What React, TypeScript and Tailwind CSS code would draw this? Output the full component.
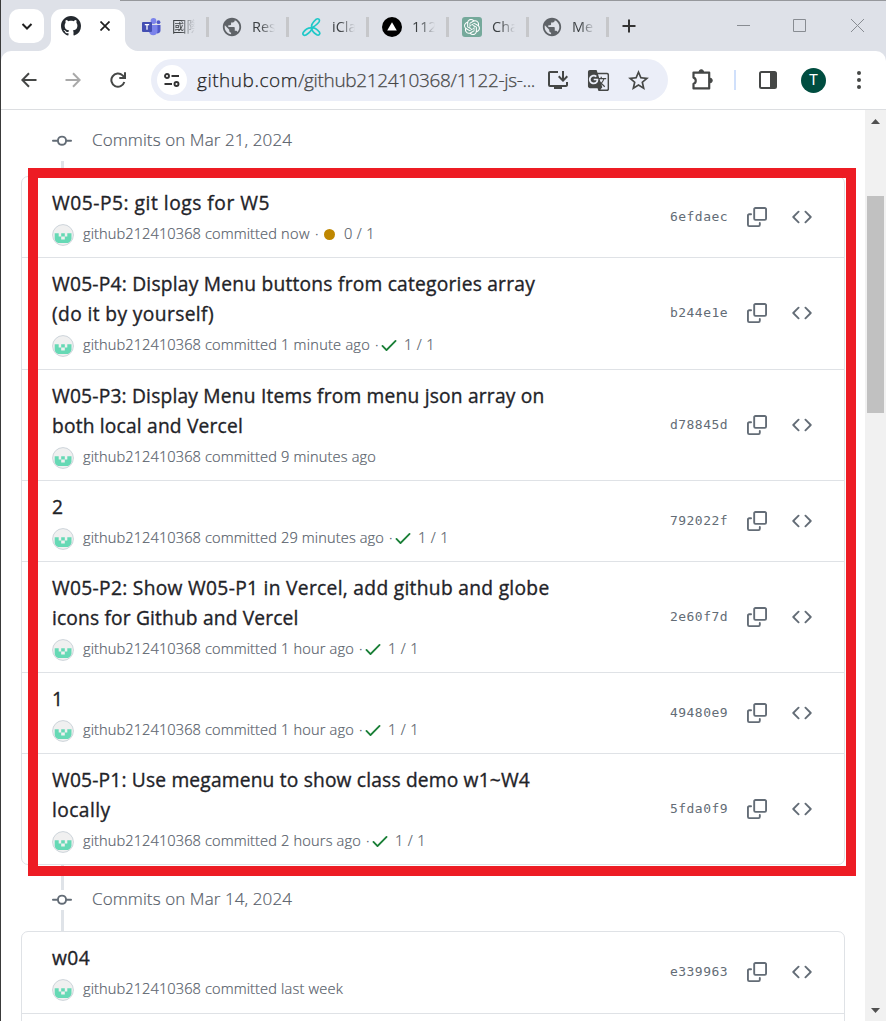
import { useLayoutEffect, useRef, type ReactNode } from 'react';
import { MdInstallDesktop, MdStarBorder, MdPublic, MdGTranslate } from 'react-icons/md';
import { SiOpenai } from 'react-icons/si';

/* Text set to an exact measure by spreading the difference over its letters. */
function Fit({ text, width, className = '' }: { text: string; width: number; className?: string }) {
  const ref = useRef<HTMLSpanElement>(null);
  useLayoutEffect(() => {
    const el = ref.current;
    if (!el) return;
    el.style.letterSpacing = '0px';
    const natural = el.getBoundingClientRect().width;
    el.style.letterSpacing = `${(width - natural) / text.length}px`;
  }, [text, width]);
  return (
    <span ref={ref} className={`inline-block whitespace-pre ${className}`}>
      {text}
    </span>
  );
}

type Commit = {
  title: [string, number][];
  time: string;
  timeWidth: number;
  status?: 'pending' | 'done';
  count?: string;
  hash: string;
  height: string;
};

const march21: Commit[] = [
  { title: [['W05-P5: git logs for W5', 218]], time: 'now', timeWidth: 29, status: 'pending', count: '0 / 1', hash: '6efdaec', height: 'h-[80px]' },
  { title: [['W05-P4: Display Menu buttons from categories array', 483], ['(do it by yourself)', 162]], time: '1 minute ago', timeWidth: 89, status: 'done', count: '1 / 1', hash: 'b244e1e', height: 'h-[112px] pb-px' },
  { title: [['W05-P3: Display Menu Items from menu json array on', 492.5], ['both local and Vercel', 191]], time: '9 minutes ago', timeWidth: 95, hash: 'd78845d', height: 'h-[111px]' },
  { title: [['2', 11]], time: '29 minutes ago', timeWidth: 103, status: 'done', count: '1 / 1', hash: '792022f', height: 'h-[81px]' },
  { title: [['W05-P2: Show W05-P1 in Vercel, add github and globe', 497.5], ['icons for Github and Vercel', 246.5]], time: '1 hour ago', timeWidth: 73, status: 'done', count: '1 / 1', hash: '2e60f7d', height: 'h-[111px]' },
  { title: [['1', 11]], time: '1 hour ago', timeWidth: 73, status: 'done', count: '1 / 1', hash: '49480e9', height: 'h-[81px]' },
  { title: [['W05-P1: Use megamenu to show class demo w1~W4', 478], ['locally', 58.5]], time: '2 hours ago', timeWidth: 80, status: 'done', count: '1 / 1', hash: '5fda0f9', height: 'h-[111px]' },
];

const march14: Commit[] = [
  { title: [['w04', 38]], time: 'last week', timeWidth: 62, hash: 'e339963', height: 'h-[81px] pb-[2px]' },
];

function Octicon({ d, className = '' }: { d: string[]; className?: string }) {
  return (
    <svg viewBox="0 0 16 16" className={`shrink-0 fill-current ${className}`}>
      {d.map((p) => (
        <path key={p} d={p} />
      ))}
    </svg>
  );
}

const MARK = [
  'M8 0C3.58 0 0 3.58 0 8c0 3.54 2.29 6.53 5.47 7.59.4.07.55-.17.55-.38 0-.19-.01-.82-.01-1.49-2.01.37-2.53-.49-2.69-.94-.09-.23-.48-.94-.82-1.13-.28-.15-.68-.52-.01-.53.63-.01 1.08.58 1.23.82.72 1.21 1.87.87 2.33.66.07-.52.28-.87.51-1.07-1.78-.2-3.64-.89-3.64-3.95 0-.87.31-1.59.82-2.15-.08-.2-.36-1.02.08-2.12 0 0 .67-.21 2.2.82.64-.18 1.32-.27 2-.27.68 0 1.36.09 2 .27 1.53-1.04 2.2-.82 2.2-.82.44 1.1.16 1.92.08 2.12.51.56.82 1.27.82 2.15 0 3.07-1.87 3.75-3.65 3.95.29.25.54.73.54 1.48 0 1.07-.01 1.93-.01 2.2 0 .21.15.46.55.38A8.013 8.013 0 0 0 16 8c0-4.42-3.58-8-8-8Z',
];
const COPY = [
  'M0 6.75C0 5.784.784 5 1.75 5h1.5a.75.75 0 0 1 0 1.5h-1.5a.25.25 0 0 0-.25.25v7.5c0 .138.112.25.25.25h7.5a.25.25 0 0 0 .25-.25v-1.5a.75.75 0 0 1 1.5 0v1.5A1.75 1.75 0 0 1 9.25 16h-7.5A1.75 1.75 0 0 1 0 14.25Z',
  'M5 1.75C5 .784 5.784 0 6.75 0h7.5C15.216 0 16 .784 16 1.75v7.5A1.75 1.75 0 0 1 14.25 11h-7.5A1.75 1.75 0 0 1 5 9.25Zm1.75-.25a.25.25 0 0 0-.25.25v7.5c0 .138.112.25.25.25h7.5a.25.25 0 0 0 .25-.25v-7.5a.25.25 0 0 0-.25-.25Z',
];
const CODE = [
  'm11.28 3.22 4.25 4.25a.75.75 0 0 1 0 1.06l-4.25 4.25a.749.749 0 0 1-1.275-.326.749.749 0 0 1 .215-.734L13.94 8l-3.72-3.72a.749.749 0 0 1 .326-1.275.749.749 0 0 1 .734.215Zm-6.56 0a.751.751 0 0 1 1.042.018.751.751 0 0 1 .018 1.042L2.06 8l3.72 3.72a.749.749 0 0 1-.326 1.275.749.749 0 0 1-.734-.215L.47 8.53a.75.75 0 0 1 0-1.06Z',
];
const GIT_COMMIT = [
  'M11.93 8.5a4.002 4.002 0 0 1-7.86 0H.75a.75.75 0 0 1 0-1.5h3.32a4.002 4.002 0 0 1 7.86 0h3.32a.75.75 0 0 1 0 1.5Zm-1.43-.75a2.5 2.5 0 1 0-5 0 2.5 2.5 0 0 0 5 0Z',
];
const CHECK = [
  'M13.78 4.22a.75.75 0 0 1 0 1.06l-7.25 7.25a.75.75 0 0 1-1.06 0L2.22 9.28a.751.751 0 0 1 .018-1.042.751.751 0 0 1 1.042-.018L6 10.94l6.72-6.72a.75.75 0 0 1 1.06 0Z',
];

function Avatar() {
  return (
    <svg viewBox="0 0 22 22" className="h-[22px] w-[22px] shrink-0">
      <defs>
        <clipPath id="avatar-clip">
          <circle cx="11" cy="11" r="9.7" />
        </clipPath>
      </defs>
      <circle cx="11" cy="11" r="10.4" fill="#f0f0f0" />
      <path
        clipPath="url(#avatar-clip)"
        fill="#66d9b5"
        fillRule="evenodd"
        d="M2.700 9.200h4v3.300h2.500V9.200h3.600v3.300h2.500V9.200h4.200V19H2.700ZM9.200 12.500v3.100h3.600v-3.100Z"
      />
      <circle cx="11" cy="11" r="10.4" fill="none" stroke="#cdd4da" strokeWidth="1" />
    </svg>
  );
}

function CommitRow({ c, first }: { c: Commit; first: boolean }) {
  return (
    <li className={`flex shrink-0 justify-between pl-[30px] pr-[32px] ${c.height} ${first ? '' : 'border-t border-[#dfe2e6]'}`}>
      <div className="pt-[11px]">
        <h3 className="text-[19.2px] leading-[30px] text-[#1f2328] [-webkit-text-stroke:0.35px_#1f2328]">
          {c.title.map(([line, w]) => (
            <span key={line} className="block">
              <Fit text={line} width={w} />
            </span>
          ))}
        </h3>
        <div className="flex h-[32px] items-center text-[14.6px] font-light text-[#57606a] [-webkit-text-stroke:0.2px_#57606a]">
          <div className="mr-[9px] mt-px">
            <Avatar />
          </div>
          <span className="w-[122px]">
            <Fit text="github212410368" width={118} />
          </span>
          <span className="w-[76px]">
            <Fit text="committed" width={72} />
          </span>
          <Fit text={c.time} width={c.timeWidth} />
          {c.status && (
            <>
              <span className="ml-[5px] w-[4px]">·</span>
              {c.status === 'pending' ? (
                <span className="ml-[5px] mr-[9px] h-[11px] w-[11px] rounded-full bg-[#bf8700]" />
              ) : (
                <Octicon d={CHECK} className="mr-[5px] h-5 w-5 text-[#1a7f37]" />
              )}
              <Fit text={c.count ?? ''} width={31} />
            </>
          )}
        </div>
      </div>
      <div className="flex h-[79px] items-center self-center text-[#636c76]">
        <Fit text={c.hash} width={58} className="font-['DejaVu_Sans_Mono',monospace] text-[13px]" />
        <Octicon d={COPY} className="ml-[19px] h-5 w-5" />
        <Octicon d={CODE} className="ml-[25px] h-5 w-5" />
      </div>
    </li>
  );
}

function CommitList({ commits, children }: { commits: Commit[]; children?: ReactNode }) {
  return (
    <ul className="ml-[20px] w-[824px] rounded-[7px] border border-[#dfe2e6] bg-white">
      {commits.map((c, i) => (
        <CommitRow key={c.hash} c={c} first={i === 0} />
      ))}
      {children}
    </ul>
  );
}

function TimelineHeader({ label, top }: { label: string; top: boolean }) {
  return (
    <div className="flex h-[66px] shrink-0 pl-[51px]">
      <div className="flex w-5 flex-col items-center">
        <span className={top ? 'h-[21px] w-[3px]' : 'h-[25px] w-[3px] bg-[#dfe3e8]'} />
        <Octicon d={GIT_COMMIT} className={top ? 'mb-[10px] h-5 w-5' : 'h-5 w-5'} />
        <span className="w-[3px] grow bg-[#dfe3e8]" />
      </div>
      <h2 className={`ml-[20px] text-[17px] font-light leading-[26px] text-[#57606a] [-webkit-text-stroke:0.2px_#57606a] ${top ? 'mt-[17px]' : 'mt-[21px]'}`}>
        <Fit text={label} width={200} />
      </h2>
    </div>
  );
}

function TeamsIcon() {
  return (
    <svg viewBox="0 0 20 20" className="h-5 w-5">
      <circle cx="16.500" cy="5.200" r="1.900" fill="#5059c9" />
      <path d="M14 8h4.500v5.500a2.800 2.800 0 0 1-4.500 2.300Z" fill="#5059c9" />
      <circle cx="11.500" cy="4" r="2.900" fill="#7b83eb" />
      <path d="M7 8h8.500v6.500a4.300 4.300 0 0 1-8.500 0Z" fill="#7b83eb" />
      <rect x="0" y="5" width="10" height="10" rx="1" fill="#444fb3" />
      <path d="M2.800 7.700h4.400M5 7.700v5" stroke="#fff" strokeWidth="1.300" />
    </svg>
  );
}

function IClassIcon() {
  return (
    <svg viewBox="0 0 20 20" className="h-5 w-5" fill="none" stroke="#1fc8c8" strokeWidth="1.700" strokeLinejoin="round">
      <path d="M9.800 11C8.600 8.200 10.500 5.500 14.300 2.200c1.900-1.200 3.900.4 2.900 2.400C15.500 7.500 12 9.500 9.800 11Z" />
      <path d="M9.800 11C6 10.500 3 13 1.200 15.600c-1 2 .8 3.500 2.700 2.500C7 16 10 14 9.800 11Z" />
      <path d="M9.800 11c3-.8 5.400 1.300 7.700 4.200 1.100 2-.9 3.500-2.700 2.500C12 16 9.500 14 9.800 11Z" />
    </svg>
  );
}

function VercelIcon() {
  return (
    <svg viewBox="0 0 20 20" className="h-5 w-5">
      <circle cx="10" cy="10" r="10" fill="#000" />
      <path d="M10 5.200 14.800 13.500H5.200Z" fill="#fff" />
    </svg>
  );
}

function ChatIcon() {
  return (
    <span className="flex h-5 w-5 items-center justify-center rounded-[3px] bg-[#75a99b] text-white">
      <SiOpenai size={16} />
    </span>
  );
}

function Globe() {
  return <MdPublic size={22} className="-ml-px shrink-0 text-[#5f6368]" />;
}

const tabs: { icon: ReactNode; label: string }[] = [
  { icon: <TeamsIcon />, label: '國際' },
  { icon: <Globe />, label: 'Res' },
  { icon: <IClassIcon />, label: 'iCla' },
  { icon: <VercelIcon />, label: '112' },
  { icon: <ChatIcon />, label: 'Cha' },
  { icon: <Globe />, label: 'Me' },
];

function TabStrip() {
  return (
    <div className="flex h-[51px] items-start bg-[#dee1e8]">
      <div className="ml-[8px] mt-[9px] flex h-[34px] w-[35px] items-center justify-center rounded-[10px] bg-white">
        <svg viewBox="0 0 12 12" className="h-3 w-3" fill="none" stroke="#1f1f1f" strokeWidth="2">
          <path d="m1.500 4 4.500 4.500L10.500 4" />
        </svg>
      </div>
      <div className="relative ml-[7px] mt-[9px] flex h-[42px] w-[74px] items-start rounded-t-[11px] bg-white pl-[10px] pt-[7px]">
        <svg viewBox="0 0 14 14" className="absolute -left-[13px] bottom-0 h-[14px] w-[14px]">
          <path d="M14 0v14H0A13 13 0 0 0 13 0Z" fill="#fff" />
        </svg>
        <svg viewBox="0 0 14 14" className="absolute -right-[13px] bottom-0 h-[14px] w-[14px]">
          <path d="M0 0v14h14A13 13 0 0 1 1 0Z" fill="#fff" />
        </svg>
        <Octicon d={MARK} className="h-5 w-5 text-[#24292f]" />
        <svg viewBox="0 0 10 10" className="ml-[19px] mt-[5px] h-[10px] w-[10px]" stroke="#1f1f1f" strokeWidth="1.700">
          <path d="m.5.5 9 9M9.500.5l-9 9" />
        </svg>
      </div>
      <div className="ml-[4px] mt-[16px] flex">
        {tabs.map((t, i) => (
          <div key={i} className="flex h-[22px] w-20 items-center pl-[13px]">
            <span className="flex w-[20px] shrink-0">{t.icon}</span>
            <span className="ml-[10px] w-[23px] shrink-0 overflow-hidden whitespace-nowrap text-[14.5px] leading-[22px] text-[#3c4043] mask-r-from-35% mask-r-to-100%">
              {t.label}
            </span>
            <span className="ml-[11px] h-5 w-[3px] shrink-0 bg-[#c6c7ca]" />
          </div>
        ))}
      </div>
      <svg viewBox="0 0 14 14" className="ml-[13px] mt-[19px] h-[14px] w-[14px]" stroke="#333" strokeWidth="2">
        <path d="M7 .5v13M.5 7h13" />
      </svg>
      <div className="ml-auto mr-[22px] mt-[19px] flex gap-[43px]">
        <svg viewBox="0 0 13 13" className="h-[13px] w-[13px]" stroke="#888c92" fill="none">
          <path d="M0 6.500h13" />
        </svg>
        <svg viewBox="0 0 13 13" className="h-[13px] w-[13px]" stroke="#888c92" fill="none">
          <path d="M.5.5h12v12H.5Z" />
        </svg>
        <svg viewBox="0 0 13 13" className="ml-[2px] h-[13px] w-[13px]" stroke="#888c92" fill="none">
          <path d="m0 0 13 13M13 0 0 13" />
        </svg>
      </div>
    </div>
  );
}

function Toolbar() {
  return (
    <div className="bg-[#dee1e8]">
      <div className="flex h-[59px] items-center rounded-t-[10px] border-b border-[#dcdee1] bg-white pl-[20px] text-[#454746]">
        <svg viewBox="0 0 16 16" className="h-4 w-4" fill="none" stroke="currentColor" strokeWidth="2">
          <path d="M15.500 8H2M8 1.300 1.300 8 8 14.700" />
        </svg>
        <svg viewBox="0 0 16 16" className="ml-[28px] h-4 w-4 text-[#a9a9a9]" fill="none" stroke="currentColor" strokeWidth="2">
          <path d="M.5 8H14M8 1.300 14.700 8 8 14.700" />
        </svg>
        <svg viewBox="0 0 16 16" className="ml-[29px] h-4 w-4" fill="none" stroke="currentColor" strokeWidth="2">
          <path d="M14.300 10a6.600 6.600 0 1 1-1.700-6.600L15 6" />
          <path d="M15 .3V6.100H9.300" />
        </svg>
        <div className="ml-[25px] flex h-[42px] w-[517px] items-center rounded-full bg-[#ebeef8]">
          <span className="ml-[6px] flex h-[30px] w-[30px] items-center justify-center rounded-full bg-white">
            <svg viewBox="0 0 16 14" className="h-[14px] w-4" fill="none" stroke="#333" strokeWidth="1.900">
              <circle cx="3" cy="3" r="2" />
              <path d="M7.500 3H15M.5 11H8" />
              <circle cx="12.500" cy="11" r="2" />
            </svg>
          </span>
          <span className="ml-[10px] w-[338px] whitespace-pre text-[19px] font-light leading-[28px]">
            <Fit text="github.com" width={101} className="text-[#1f1f1f] [-webkit-text-stroke:0.25px_#1f1f1f]" />
            <Fit text="/github212410368/1122-js-..." width={237} className="text-[#474747] [-webkit-text-stroke:0.25px_#474747]" />
          </span>
          <MdInstallDesktop size={24} className="ml-[11px]" />
          <MdGTranslate size={23} className="ml-[17px]" />
          <MdStarBorder size={25} className="ml-[16px]" />
        </div>
        <svg viewBox="0 0 24 24" className="ml-[22px] h-[24px] w-[24px]" fill="none" stroke="currentColor" strokeWidth="2.200" strokeLinejoin="round">
          <path d="M3.500 4.600h15.700v15.800H3.500v-4.600c3-.8 3-5.400 0-6.200Z" />
          <path d="M9 4a2.300 2.300 0 0 1 4.600 0ZM20 10.200a2.300 2.300 0 0 1 0 4.600Z" fill="currentColor" strokeWidth="1" />
        </svg>
        <span className="ml-[20px] h-5 w-[2px] bg-[#d0e0fb]" />
        <svg viewBox="0 0 18 18" className="ml-[23px] h-[18px] w-[18px]">
          <rect x="1" y="1" width="16" height="16" rx="1.500" fill="none" stroke="currentColor" strokeWidth="2" />
          <path d="M11 1h6v16h-6Z" fill="currentColor" />
        </svg>
        <span className="ml-[24px] flex h-[25px] w-[25px] items-center justify-center rounded-full bg-[#004d40] font-[Roboto,sans-serif] text-[15px] text-white">
          T
        </span>
        <svg viewBox="0 0 4 18" className="ml-[31px] h-[18px] w-[4px] fill-current">
          <circle cx="2" cy="2" r="2" />
          <circle cx="2" cy="9" r="2" />
          <circle cx="2" cy="16" r="2" />
        </svg>
      </div>
    </div>
  );
}

function Scrollbar() {
  return (
    <div className="flex w-[21px] shrink-0 flex-col items-center bg-[#f1f1f1]">
      <svg viewBox="0 0 9 5" className="mt-[9px] h-[5px] w-[9px] fill-[#505050]">
        <path d="M0 5 4.500 0 9 5Z" />
      </svg>
      <span className="mt-[72px] h-[217px] w-[17px] bg-[#c1c1c1]" />
      <svg viewBox="0 0 9 5" className="mb-[8px] mt-auto h-[5px] w-[9px] fill-[#505050]">
        <path d="M0 0 4.500 5 9 0Z" />
      </svg>
    </div>
  );
}

export default function App() {
  return (
    <div className="relative flex h-[1021px] w-[886px] flex-col overflow-hidden border-l border-[#3a3a3a] bg-white font-['Open_Sans','Noto_Sans_CJK_TC',sans-serif]">
      <TabStrip />
      <Toolbar />
      <div className="flex h-[911px]">
        <main className="flex grow flex-col overflow-hidden text-[#636c76]">
          <TimelineHeader label="Commits on Mar 21, 2024" top />
          <CommitList commits={march21} />
          <TimelineHeader label="Commits on Mar 14, 2024" top={false} />
          <CommitList commits={march14}>
            <li className="h-[40px] border-t border-[#dfe2e6]" />
          </CommitList>
        </main>
        <Scrollbar />
      </div>
      <div className="absolute left-[119px] right-0 top-0 h-px bg-[#96989c]" />
      <div className="absolute left-[27px] top-[168px] h-[708px] w-[828px] border-[10px] border-[#ed1c24]" />
    </div>
  );
}
